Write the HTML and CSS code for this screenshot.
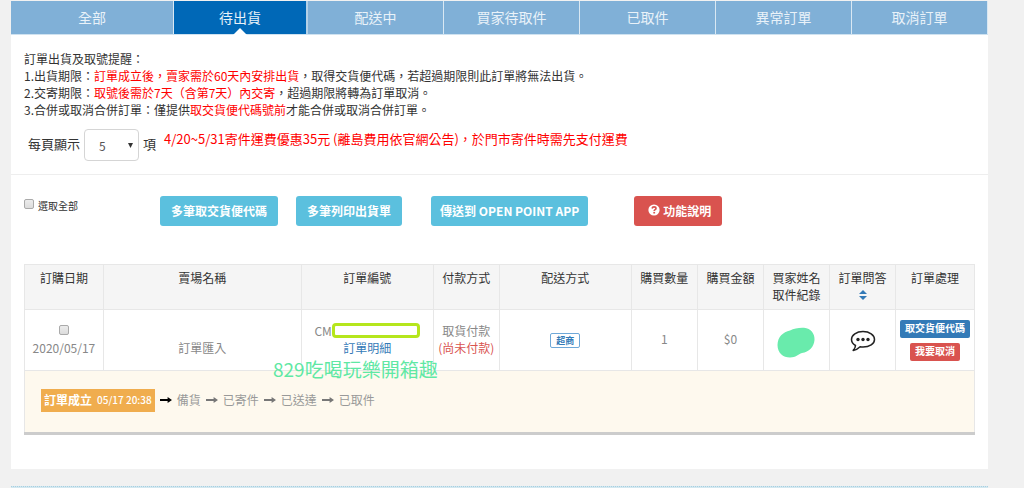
FILE: index.html
```html
<!DOCTYPE html>
<html lang="zh-Hant">
<head>
<meta charset="utf-8">
<meta name="viewport" content="width=device-width, initial-scale=1">
<title>待出貨訂單</title>
<link rel="stylesheet" href="styles.css">
</head>
<body>
<svg class="defs" aria-hidden="true">
  <symbol id="arrow" viewBox="0 0 12 8"><path d="M0 3.1h7.6V.9L12 4 7.6 7.1V4.9H0z" fill="currentColor"/></symbol>
</svg>
<main class="panel">
  <nav class="tabs">
    <a class="tab" href="#all">全部</a>
    <a class="tab tab-active" href="#pending" aria-current="page">待出貨</a>
    <a class="tab" href="#shipping">配送中</a>
    <a class="tab" href="#pickup">買家待取件</a>
    <a class="tab" href="#picked">已取件</a>
    <a class="tab" href="#abnormal">異常訂單</a>
    <a class="tab" href="#cancelled">取消訂單</a>
  </nav>

  <section class="notice">
    <p>訂單出貨及取號提醒：</p>
    <p>1.出貨期限：<span class="red">訂單成立後，賣家需於60天內安排出貨</span>，取得交貨便代碼，若超過期限則此訂單將無法出貨。</p>
    <p>2.交寄期限：<span class="red">取號後需於7天（含第7天）內交寄</span>，超過期限將轉為訂單取消。</p>
    <p>3.合併或取消合併訂單：僅提供<span class="red">取交貨便代碼號前</span>才能合併或取消合併訂單。</p>
  </section>

  <section class="paging">
    <label for="page-size">每頁顯示</label>
    <span class="select-box">
      <select id="page-size"><option>5</option><option>10</option><option>20</option></select>
      <svg class="caret" viewBox="0 0 5 5" aria-hidden="true"><path d="M0 0h5L2.5 5z" fill="#333"/></svg>
    </span>
    <span>項</span>
    <p class="promo red">4/20~5/31寄件運費優惠35元 (離島費用依官網公告)，於門市寄件時需先支付運費</p>
  </section>

  <section class="toolbar">
    <label class="select-all"><input class="check" type="checkbox"><span>選取全部</span></label>
    <div class="actions">
      <button class="btn" type="button">多筆取交貨便代碼</button>
      <button class="btn" type="button">多筆列印出貨單</button>
      <button class="btn btn-app" type="button">傳送到 OPEN POINT APP</button>
      <button class="btn btn-help" type="button">
        <svg class="help-icon" viewBox="0 0 12 12" aria-hidden="true"><circle cx="6" cy="6" r="5.6" fill="#fff"/><path d="M4.1 4.5C4.3 3.3 5 2.8 6 2.8c1.200 0 2 .7 2 1.600C8 5.700 6.200 5.600 6.200 7" fill="none" stroke="#d9534f" stroke-width="1.700"/><path d="M5.300 7.900h1.800v1.600H5.300z" fill="#d9534f"/></svg>
        <span>功能說明</span>
      </button>
    </div>
  </section>

  <section class="orders">
    <table class="table">
      <colgroup>
        <col class="c-date"><col class="c-shop"><col class="c-order"><col class="c-small"><col class="c-order">
        <col class="c-small"><col class="c-small"><col class="c-small"><col class="c-small"><col class="c-date">
      </colgroup>
      <thead>
        <tr>
          <th>訂購日期</th><th>賣場名稱</th><th>訂單編號</th><th>付款方式</th><th>配送方式</th>
          <th>購買數量</th><th>購買金額</th><th>買家姓名<br>取件紀錄</th>
          <th>訂單問答<button class="sort" type="button" aria-label="排序"><svg class="sort-icon" viewBox="0 0 8 10" aria-hidden="true"><path d="M4 0l4 4H0zM0 6h8L4 10z" fill="#337ab7"/></svg></button></th>
          <th>訂單處理</th>
        </tr>
      </thead>
      <tbody>
        <tr>
          <td><div class="line"><input class="check" type="checkbox" aria-label="選取訂單"></div><div>2020/05/17</div></td>
          <td><div class="line"></div><div>訂單匯入</div></td>
          <td><div class="line"><span>CM</span><span class="mask"></span></div><a class="link" href="#detail">訂單明細</a></td>
          <td>取貨付款<br><span class="unpaid">(尚未付款)</span></td>
          <td><span class="tag">超商</span></td>
          <td>1</td>
          <td>$0</td>
          <td><svg class="blob" viewBox="0 0 38 31" aria-hidden="true"><path d="M.5 18C.5 10 6 5 13 3.500C17 1.500 22 .5 27 .8C34 1.500 38 7 37.500 13C37 20 32 25 25 26C21 27.500 19 30.500 13 30.500C6 30.500 .5 26 .5 18z" fill="#69ebac"/></svg></td>
          <td><button class="chat" type="button" aria-label="訂單問答"><svg class="chat-icon" viewBox="0 0 26 22" aria-hidden="true"><path d="M5.500 15.500C2.800 14 1.500 11.800 1.500 9.500 1.500 5 6.500 1.500 13 1.500S24.500 5 24.500 9.500 19.500 17 13 17c-1 0-2-.1-2.900-.3C8.200 18.600 6 20 3.200 20.400 4.600 19 5.400 17.400 5.500 15.500z" fill="#fff" stroke="#222" stroke-width="1.500" stroke-linejoin="round"/><g fill="#222"><circle cx="8" cy="9.500" r="1.700"/><circle cx="13" cy="9.500" r="1.700"/><circle cx="18" cy="9.500" r="1.700"/></g></svg></button></td>
          <td><div class="op-list"><button class="op" type="button">取交貨便代碼</button><button class="op op-cancel" type="button">我要取消</button></div></td>
        </tr>
        <tr class="progress">
          <td colspan="10">
            <div class="steps">
              <span class="step-now"><span>訂單成立</span><span class="time">05/17 20:38</span></span>
              <svg class="arrow arrow-now" aria-hidden="true"><use href="#arrow"/></svg><span>備貨</span>
              <svg class="arrow" aria-hidden="true"><use href="#arrow"/></svg><span>已寄件</span>
              <svg class="arrow" aria-hidden="true"><use href="#arrow"/></svg><span>已送達</span>
              <svg class="arrow" aria-hidden="true"><use href="#arrow"/></svg><span>已取件</span>
            </div>
          </td>
        </tr>
      </tbody>
    </table>
    <div class="watermark">829吃喝玩樂開箱趣</div>
  </section>
</main>
<footer class="footer"></footer>
</body>
</html>
```

FILE: styles.css
```css
* { box-sizing: border-box; }

body {
  margin: 0;
  padding: 1px 36px 0 11px;
  background: #f1f1f1;
  color: #333;
  font: 12px/17px "Noto Sans CJK TC", sans-serif;
}

p { margin: 0; }
button, select, input { font: inherit; margin: 0; }
button { border: 0; padding: 0; cursor: pointer; }
.defs { position: absolute; width: 0; height: 0; }
.red { color: #f00; }

.panel { background: #fff; padding-bottom: 34px; }

.tabs {
  display: grid;
  grid-template-columns: 163fr 134fr repeat(5, 136fr);
  border-bottom: 1px solid #cfe2f0;
}
.tab {
  position: relative;
  height: 33px;
  border-right: 1px solid #d9e8f3;
  background: #80b0d7;
  color: #e9f2f9;
  font-size: 14px;
  line-height: 32px;
  text-align: center;
  text-decoration: none;
}
.tab-active { background: #0068b7; border-right: 2px solid #b3d1e8; }
.tab-active::after {
  content: "";
  position: absolute;
  bottom: -1px;
  left: 50%;
  margin-left: -7px;
  border: 7px solid transparent;
  border-top: 0;
  border-bottom-color: #fff;
}

.notice { padding: 15px 13px 0; }

.paging {
  display: flex;
  align-items: center;
  padding: 11px 17px 13px;
  border-bottom: 1px solid #eee;
  font-size: 13px;
}
.paging label, .paging > span:last-of-type { padding-bottom: 4px; }
.select-box { position: relative; margin: 0 4px; }
.select-box select {
  display: block;
  width: 55px;
  height: 32px;
  padding: 0 14px;
  border: 1px solid #d5d5d5;
  border-radius: 4px;
  background: #fff;
  color: #555;
  font-size: 12px;
  appearance: none;
}
.caret { position: absolute; right: 6px; top: 14px; width: 5px; height: 5px; }
.promo { margin-left: 8px; padding-bottom: 14px; }

.toolbar {
  display: flex;
  align-items: flex-start;
  padding: 21px 13px 38px;
}
.select-all {
  display: flex;
  gap: 4px;
  width: 136px;
  padding-top: 3px;
  font-size: 10px;
  line-height: 14px;
}
.check {
  appearance: none;
  width: 10px;
  height: 10px;
  border: 1px solid #aaa;
  border-radius: 2px;
  background: linear-gradient(#ececec, #dcdcdc);
}
.check:checked { background: #337ab7; }
.actions { display: flex; }
.btn {
  display: flex;
  align-items: center;
  height: 30px;
  margin-right: 18px;
  padding: 0 11px 2px;
  border-radius: 3px;
  background: #5bc0de;
  color: #fff;
  font-weight: 700;
}
.btn-app { margin: 0 46px 0 11px; padding: 0 9px 2px; }
.btn-help { gap: 3px; padding-left: 14px; background: #d9534f; }
.help-icon { width: 12px; height: 12px; }

.orders { position: relative; margin: 0 13px; }
.table {
  width: 100%;
  border-collapse: collapse;
  table-layout: fixed;
  text-align: center;
}
.c-date { width: 8.300%; }
.c-shop { width: 20.800%; }
.c-order { width: 13.900%; }
.c-small { width: 6.950%; }
.table th, .table td { border: 1px solid #e7e7e7; }
.table th {
  height: 45px;
  padding: 4px 0 6px;
  background: #f5f5f5;
  font-weight: 400;
  vertical-align: top;
}
.table td { height: 61px; padding: 0 0 3px; color: #888; vertical-align: middle; }
.sort { display: flex; justify-content: center; align-items: center; width: 100%; height: 17px; background: none; }
.sort-icon { width: 8px; height: 10px; }

.line { display: flex; justify-content: center; align-items: center; height: 17px; }
.mask { width: 88px; height: 15px; border: 3px solid #b5e61d; border-radius: 4px; }
.link { color: #337ab7; text-decoration: none; }
.unpaid { color: #d9534f; }
.tag {
  display: inline-block;
  padding: 0 5px;
  border: 1px solid #6fa8d8;
  border-radius: 2px;
  color: #337ab7;
  font-size: 9px;
  font-weight: 700;
  line-height: 13px;
}
.blob { display: block; width: 38px; height: 31px; margin: 7px auto 0; }
.chat { display: block; margin: 5px auto 0; background: none; }
.chat-icon { display: block; width: 26px; height: 22px; }
.op-list { display: flex; flex-direction: column; align-items: center; gap: 5px; padding-top: 3px; }
.op {
  height: 18px;
  padding: 0 5px 2px;
  border-radius: 2px;
  background: #337ab7;
  color: #fff;
  font-size: 10px;
  font-weight: 700;
  line-height: 16px;
  white-space: nowrap;
}
.op-cancel { background: #d9534f; }

.table .progress td {
  height: 63px;
  border-bottom: 3px solid #ccc;
  background: #fef9ee;
  color: #999;
}
.steps { display: flex; align-items: center; gap: 5px; padding-left: 16px; }
.steps > span { padding-bottom: 1px; }
.steps .step-now {
  display: flex;
  align-items: center;
  gap: 5px;
  height: 23px;
  padding: 0 3px 2px;
  background: #f0ad4e;
  color: #fff;
  font-weight: 700;
}
.steps .time { font-size: 10px; font-weight: 500; }
.arrow { width: 12px; height: 8px; color: #777; }
.arrow-now { color: #000; }

.watermark {
  position: absolute;
  top: 92px;
  left: 249px;
  color: #5fe8a4;
  font-size: 19px;
  line-height: 26px;
  white-space: nowrap;
}

.footer {
  height: 2px;
  margin-top: 17px;
  border-top: 1px dotted #a9cfe0;
  background: #d3e8f0;
}
```
